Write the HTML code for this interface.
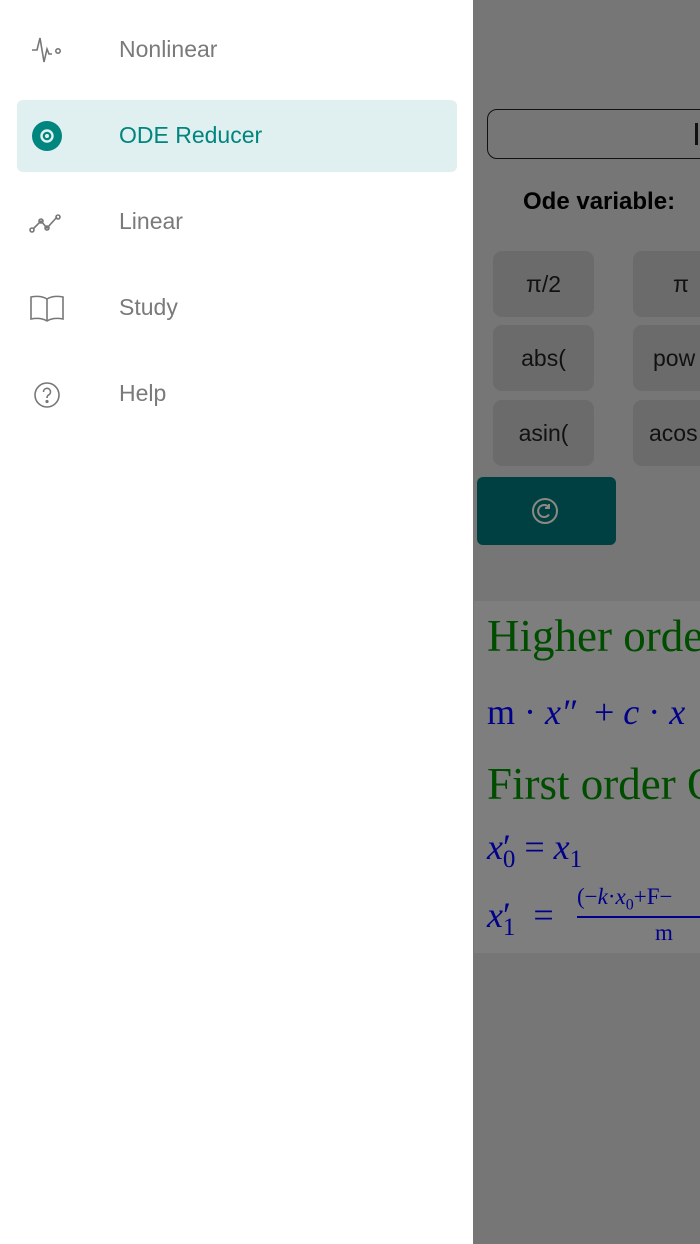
<!DOCTYPE html>
<html><head><meta charset="utf-8"><style>
body{margin:0;width:700px;height:1244px;position:relative;overflow:hidden;background:#767676;font-family:"Liberation Sans",sans-serif}
.a{position:absolute}
.drawer{left:0;top:0;width:473px;height:1244px;background:#fff}
.item{position:absolute;left:119px;font-size:23px;color:#7a7a7a}
.btn{position:absolute;width:101px;height:66px;border-radius:9px;background:#6b6b6b;color:#111;font-size:23px;text-align:center;line-height:66px}
.ser{font-family:"Liberation Serif",serif}
</style></head><body>
<div class="a drawer">
 <svg class="a" style="left:30px;top:33px" width="34" height="34" viewBox="0 0 34 34" fill="none" stroke="#777" stroke-width="1.6"><path d="M2 17h5l3-12 4 24 3-13 2 5h3"/><circle cx="28" cy="18" r="2.2"/></svg>
 <div class="item" style="top:36px">Nonlinear</div>
 <div class="a" style="left:17px;top:100px;width:440px;height:72px;background:#e0efef;border-radius:6px"></div>
 <svg class="a" style="left:32px;top:121px" width="30" height="30" viewBox="0 0 30 30"><circle cx="15" cy="15" r="15" fill="#00857f"/><circle cx="15" cy="15" r="5.5" fill="none" stroke="#e0efef" stroke-width="2.4"/><circle cx="15" cy="15" r="2" fill="#e0efef"/></svg>
 <div class="item" style="top:122px;color:#00857f">ODE Reducer</div>
 <svg class="a" style="left:29px;top:210px" width="36" height="24" viewBox="0 0 36 24" fill="none" stroke="#777" stroke-width="1.6"><path d="M4 19l8-8 6 7 10-11"/><circle cx="3" cy="20" r="2"/><circle cx="12" cy="11" r="2"/><circle cx="18" cy="18" r="2"/><circle cx="29" cy="7" r="2"/></svg>
 <div class="item" style="top:208px">Linear</div>
 <svg class="a" style="left:30px;top:294px" width="34" height="30" viewBox="0 0 34 30" fill="none" stroke="#777" stroke-width="1.6"><path d="M17 5C12 2 6 2 1 3v22c5-1 11-1 16 2 5-3 11-3 16-2V3c-5-1-11-1-16 2zM17 5v22"/></svg>
 <div class="item" style="top:294px">Study</div>
 <svg class="a" style="left:34px;top:382px" width="26" height="26" viewBox="0 0 26 26" fill="none" stroke="#777" stroke-width="1.6"><circle cx="13" cy="13" r="12"/><path d="M9.5 10a3.5 3.5 0 1 1 5 3c-1 .6-1.5 1.3-1.5 3"/><circle cx="13" cy="19.5" r=".8" fill="#777"/></svg>
 <div class="item" style="top:380px">Help</div>
</div>
<div class="a" style="left:487px;top:109px;width:240px;height:48px;border:1.5px solid #111;border-radius:10px"></div>
<div class="a" style="left:695px;top:123px;width:3px;height:22px;background:#111"></div>
<div class="a" style="left:523px;top:188px;font-size:24px;font-weight:bold;color:#000">Ode variable:</div>
<div class="btn" style="left:493px;top:251px">π/2</div>
<div class="btn" style="left:633px;top:251px;text-align:left;padding-left:40px">π</div>
<div class="btn" style="left:493px;top:325px">abs(</div>
<div class="btn" style="left:633px;top:325px;text-align:left;padding-left:20px">pow</div>
<div class="btn" style="left:493px;top:400px">asin(</div>
<div class="btn" style="left:633px;top:400px;text-align:left;padding-left:16px">acos</div>
<div class="a" style="left:477px;top:477px;width:139px;height:68px;background:#004042;border-radius:6px"></div>
<svg class="a" style="left:531px;top:497px" width="28" height="28" viewBox="0 0 28 28" fill="none" stroke="#8a8a80" stroke-width="2"><circle cx="14" cy="14" r="12"/><path d="M18 10.5a6 6 0 1 0 0 7"/><path d="M18 7v4h-4"/></svg>
<div class="a" style="left:474px;top:601px;width:226px;height:352px;background:#7e7e7e"></div>
<div class="a ser" style="left:487px;top:610px;font-size:45px;color:#004d00;white-space:nowrap">Higher order</div>
<div class="a ser" style="left:487px;top:691px;font-size:36px;color:#00008a;white-space:nowrap">m · <i>x″</i> &nbsp;+ <i>c</i> · <i>x</i></div>
<div class="a ser" style="left:487px;top:758px;font-size:45px;color:#004d00;white-space:nowrap">First order O</div>
<div class="a ser" style="left:487px;top:826px;font-size:36px;color:#00008a;white-space:nowrap"><i>x</i>′<sub style="font-size:25px;margin-left:-8px">0</sub> = <i>x</i><sub style="font-size:25px">1</sub></div>
<div class="a ser" style="left:487px;top:894px;font-size:36px;color:#00008a;white-space:nowrap"><i>x</i>′<sub style="font-size:25px;margin-left:-8px">1</sub> &nbsp;=</div>
<div class="a ser" style="left:577px;top:884px;font-size:23px;color:#00008a;white-space:nowrap">(−<i>k</i>·<i>x</i><sub style="font-size:16px">0</sub>+F−</div>
<div class="a" style="left:577px;top:916px;width:123px;height:2px;background:#00008a"></div>
<div class="a ser" style="left:655px;top:920px;font-size:23px;color:#00008a">m</div>
</body></html>
